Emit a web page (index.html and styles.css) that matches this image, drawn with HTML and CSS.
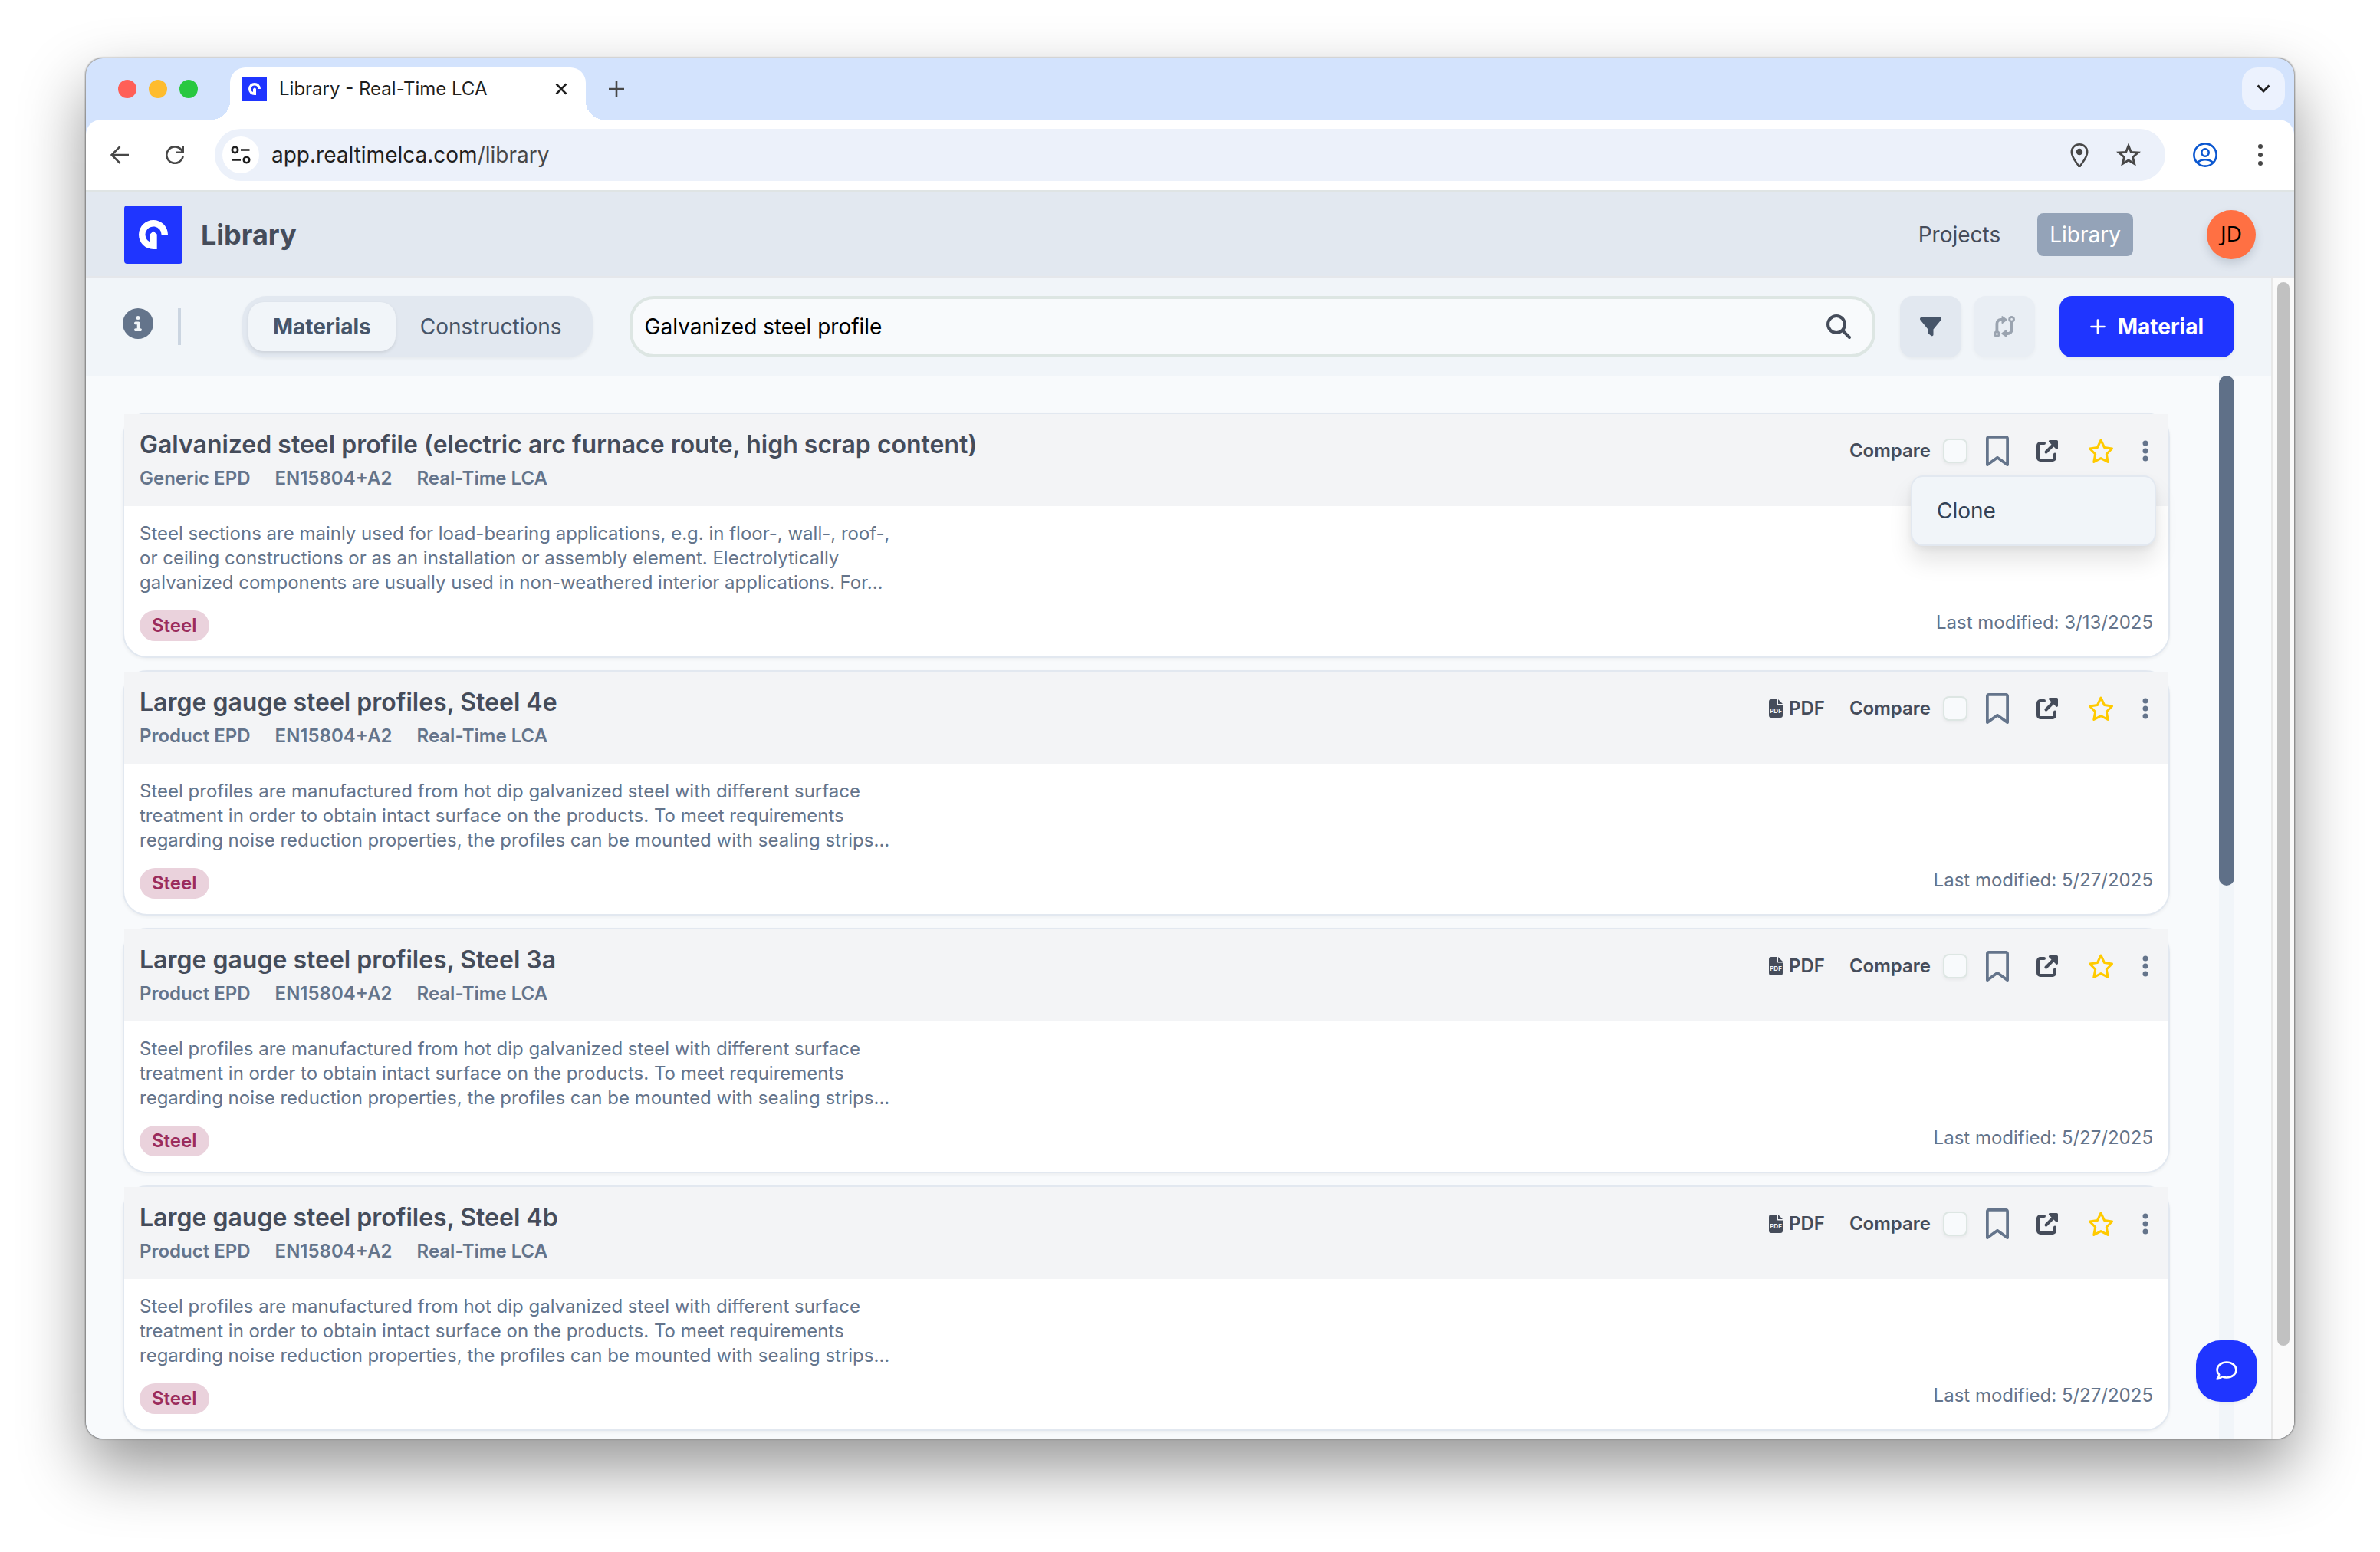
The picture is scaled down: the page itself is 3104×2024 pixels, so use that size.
FILE: index.html
```html
<!DOCTYPE html>
<html lang="en">
<head>
  <meta charset="UTF-8">
  <meta name="viewport" content="width=device-width, initial-scale=1.0">
  <title>Library - Real-Time LCA</title>
  <link rel="stylesheet" href="styles.css">
</head>
<body>

<!-- Shared icons -->
<svg class="sprite" aria-hidden="true">
  <symbol id="logo" viewBox="0 0 76 76">
    <rect width="76" height="76" fill="#1f35ff"/>
    <path fill="#fff" d="M57 38A19 19 0 1 0 38 57H42.7V37.5L38 33.6 33.3 37.8V47.5A10.6 10.6 0 1 1 48.6 38Z"/>
  </symbol>
  <symbol id="pdf" viewBox="0 0 18 24">
    <path fill="currentColor" d="M3 0H10.500V6a1.500 1.500 0 0 0 1.500 1.500H18V21a3 3 0 0 1-3 3H3a3 3 0 0 1-3-3V3a3 3 0 0 1 3-3zM12 0l6 6h-6z"/>
    <text x="9" y="18" text-anchor="middle" class="pdf-text">PDF</text>
  </symbol>
  <symbol id="bookmark" viewBox="0 0 384 512">
    <path fill="currentColor" d="M0 48C0 21.5 21.5 0 48 0V48V441.4l130.1-92.9c8.300-6 19.600-6 27.900 0L336 441.4V48H48V0H336c26.500 0 48 21.500 48 48V488c0 9-5 17.200-13 21.300s-17.600 3.400-24.900-1.800L192 397.500 37.900 507.500c-7.300 5.200-16.900 5.900-24.900 1.800S0 497 0 488V48z"/>
  </symbol>
  <symbol id="external" viewBox="0 0 28 28">
    <path fill="none" stroke="currentColor" stroke-width="4" stroke-linecap="round" d="M10 4H5a3 3 0 0 0-3 3V23a3 3 0 0 0 3 3H21a3 3 0 0 0 3-3V18.500M12.500 15.500L22 6"/>
    <path fill="currentColor" d="M17.500 0H26.500A1.500 1.500 0 0 1 28 1.500V10.500A1.500 1.500 0 0 1 25.500 11.600L16.400 2.600A1.500 1.500 0 0 1 17.500 0z"/>
  </symbol>
  <symbol id="star" viewBox="0 0 32 32">
    <path fill="none" stroke="currentColor" stroke-width="3" stroke-linejoin="round" d="M16 2L20.500 11.500 30.500 13 23.300 20.300 25.200 30.500 16 25.600 6.800 30.500 8.700 20.300 1.500 13 11.500 11.500z"/>
  </symbol>
  <symbol id="dots" viewBox="0 0 20 28">
    <circle cx="10" cy="4" r="3.500" fill="currentColor"/>
    <circle cx="10" cy="14" r="3.500" fill="currentColor"/>
    <circle cx="10" cy="24" r="3.500" fill="currentColor"/>
  </symbol>
</svg>

<div class="window">

  <!-- Browser tabs -->
  <div class="tab-strip">
    <div class="lights">
      <span class="light red"></span>
      <span class="light yellow"></span>
      <span class="light green"></span>
    </div>
    <div class="tab">
      <svg class="favicon"><use href="#logo"/></svg>
      <span class="tab-title">Library - Real-Time LCA</span>
      <button class="chrome-btn" aria-label="Close tab">
        <svg width="16" height="16" viewBox="0 0 16 16"><path d="M1.500 1.500L14.500 14.500M14.500 1.500L1.500 14.500" stroke="#1f1f1f" stroke-width="2.500"/></svg>
      </button>
    </div>
    <button class="chrome-btn new-tab" aria-label="New tab">
      <svg width="20" height="20" viewBox="0 0 20 20"><path d="M10 0V20M0 10H20" stroke="#474747" stroke-width="2.600"/></svg>
    </button>
    <button class="tab-search" aria-label="Search tabs">
      <svg width="18" height="12" viewBox="0 0 18 12"><path d="M1.500 1.500L9 9 16.500 1.500" fill="none" stroke="#1f1f1f" stroke-width="3"/></svg>
    </button>
  </div>

  <!-- Browser toolbar -->
  <div class="toolbar">
    <button class="chrome-btn wide" aria-label="Back">
      <svg width="24" height="24" viewBox="0 0 24 24"><path d="M24 12H2M12.500 1.200L1.700 12 12.500 22.800" fill="none" stroke="#474747" stroke-width="2.600"/></svg>
    </button>
    <button class="chrome-btn wide" aria-label="Reload">
      <svg width="24" height="24" viewBox="0 0 24 24"><path d="M22.700 13A10.700 10.700 0 1 1 20.500 5.500L22.500 8.500M22.700 0V8.700H14" fill="none" stroke="#474747" stroke-width="2.600"/></svg>
    </button>
    <div class="address">
      <button class="site-info" aria-label="Site information">
        <svg width="26" height="24" viewBox="0 0 26 24"><g fill="none" stroke="#1f1f1f" stroke-width="2.600"><circle cx="5.500" cy="5.500" r="3.700"/><path d="M13 5.500H24.500M2 18.500H13"/><circle cx="20.500" cy="18.500" r="3.700"/></g></svg>
      </button>
      <span class="url">app.realtimelca.com<span class="url-path">/library</span></span>
      <svg class="chrome-icon" viewBox="0 0 32 32"><path d="M16 32C12 25 5.800 19 5.800 11.500a10.200 10.200 0 0 1 20.400 0C26.200 19 20 25 16 32z" transform="translate(0 1) scale(1 .97)" fill="none" stroke="#474747" stroke-width="2.600"/><circle cx="16" cy="12" r="4.200" fill="#474747"/></svg>
      <svg class="chrome-icon" viewBox="0 0 32 32"><path d="M16 4L19.300 12.300 28.500 13 21.600 18.900 23.700 27.600 16 23 8.300 27.600 10.400 18.900 3.500 13 12.700 12.300z" fill="none" stroke="#474747" stroke-width="2.800"/></svg>
    </div>
    <button class="chrome-btn wide" aria-label="Profile">
      <svg width="32" height="32" viewBox="0 0 32 32"><g fill="none" stroke="#0b57d0" stroke-width="2.600"><circle cx="16" cy="16" r="14.600"/><circle cx="16" cy="13" r="4.700"/><path d="M6 26C11 21 21 21 26 26"/></g></svg>
    </button>
    <button class="chrome-btn wide" aria-label="Menu">
      <svg width="8" height="28" viewBox="0 0 8 28" fill="#474747"><circle cx="4" cy="3" r="3"/><circle cx="4" cy="14" r="3"/><circle cx="4" cy="25" r="3"/></svg>
    </button>
  </div>

  <!-- App header -->
  <header class="app-header">
    <svg class="logo"><use href="#logo"/></svg>
    <h1>Library</h1>
    <nav>
      <a href="#">Projects</a>
      <a href="#" class="active">Library</a>
    </nav>
    <button class="avatar">JD</button>
  </header>

  <div class="page">
    <main>

      <!-- Search and filters -->
      <div class="filters">
        <div class="info">
          <svg width="40" height="40" viewBox="0 0 512 512"><path fill="#64748b" d="M256 512A256 256 0 1 0 256 0a256 256 0 1 0 0 512zM216 336h24V272H216c-13.300 0-24-10.700-24-24s10.700-24 24-24h48c13.300 0 24 10.700 24 24v88h8c13.300 0 24 10.700 24 24s-10.700 24-24 24H216c-13.300 0-24-10.700-24-24s10.700-24 24-24zm40-208a32 32 0 1 1 0 64 32 32 0 1 1 0-64z"/></svg>
          <span class="divider"></span>
        </div>
        <div class="segment">
          <button class="active">Materials</button>
          <button>Constructions</button>
        </div>
        <div class="search">
          <input type="text" id="search" aria-label="Search materials" value="Galvanized steel profile">
          <label for="search" aria-label="Search">
            <svg width="32" height="32" viewBox="0 0 512 512"><path fill="#454c5a" d="M416 208c0 45.900-14.900 88.300-40 122.700L502.600 457.400c12.500 12.500 12.500 32.800 0 45.300s-32.800 12.500-45.300 0L330.700 376c-34.400 25.200-76.800 40-122.700 40C93.100 416 0 322.900 0 208S93.100 0 208 0S416 93.100 416 208zM208 352a144 144 0 1 0 0-288 144 144 0 1 0 0 288z"/></svg>
          </label>
        </div>
        <div class="tools">
          <button class="tool" aria-label="Filter">
            <svg width="28" height="28" viewBox="0 0 512 512"><path fill="#475569" d="M3.900 54.900C10.500 40.900 24.500 32 40 32H472c15.500 0 29.500 8.900 36.100 22.900s4.600 30.500-5.200 42.500L320 320.900V448c0 12.100-6.800 23.200-17.700 28.600s-23.800 4.300-33.500-3l-64-48c-8.100-6-12.800-15.500-12.800-25.600V320.900L9 97.300C-.7 85.400-2.800 68.800 3.900 54.900z"/></svg>
          </button>
          <button class="tool" aria-label="Compare" disabled>
            <svg width="28" height="28" viewBox="0 0 28 28"><g fill="none" stroke="#475569" stroke-width="3"><circle cx="23.600" cy="4.400" r="2.900"/><circle cx="4.400" cy="23.600" r="2.900"/><path stroke-width="3.800" d="M4.400 20.500V10a5 5 0 0 1 5-5H12M23.600 7.500V18a5 5 0 0 1-5 5H16"/></g><path fill="#475569" d="M10.500 1.200Q10.500-.5 12 .4L17.400 4.300Q18 5 17.400 5.700L12 9.700Q10.500 10.400 10.500 9zM17.500 26.800Q17.500 28.500 16 27.600L10.600 23.700Q10 23 10.600 22.300L16 18.300Q17.500 17.600 17.500 19z"/></svg>
          </button>
        </div>
        <button class="add">
          <svg width="20" height="20" viewBox="0 0 20 20"><path d="M10 1.500V18.500M1.500 10H18.500" stroke="#fff" stroke-width="2.700" stroke-linecap="round"/></svg>
          Material
        </button>
      </div>

      <!-- Results -->
      <div class="results">
        <div class="list">

          <article class="card">
            <div class="card-header">
              <div>
                <h2>Galvanized steel profile (electric arc furnace route, high scrap content)</h2>
                <div class="meta"><span>Generic EPD</span><span>EN15804+A2</span><span>Real-Time LCA</span></div>
              </div>
              <div class="actions">
                <label class="compare">Compare <input type="checkbox"></label>
                <button class="bookmark" aria-label="Bookmark"><svg><use href="#bookmark"/></svg></button>
                <button class="external" aria-label="Open"><svg><use href="#external"/></svg></button>
                <button class="star" aria-label="Favorite"><svg><use href="#star"/></svg></button>
                <div class="more">
                  <button class="dots" aria-label="More"><svg><use href="#dots"/></svg></button>
                  <div class="menu"><button>Clone</button></div>
                </div>
              </div>
            </div>
            <div class="card-body">
              <p>Steel sections are mainly used for load-bearing applications, e.g. in floor-, wall-, roof-, or ceiling constructions or as an installation or assembly element. Electrolytically galvanized components are usually used in non-weathered interior applications. For...</p>
              <div class="card-footer">
                <span class="tag">Steel</span>
                <span>Last modified: 3/13/2025</span>
              </div>
            </div>
          </article>

          <article class="card">
            <div class="card-header">
              <div>
                <h2>Large gauge steel profiles, Steel 4e</h2>
                <div class="meta"><span>Product EPD</span><span>EN15804+A2</span><span>Real-Time LCA</span></div>
              </div>
              <div class="actions">
                <a href="#" class="pdf"><svg><use href="#pdf"/></svg>PDF</a>
                <label class="compare">Compare <input type="checkbox"></label>
                <button class="bookmark" aria-label="Bookmark"><svg><use href="#bookmark"/></svg></button>
                <button class="external" aria-label="Open"><svg><use href="#external"/></svg></button>
                <button class="star" aria-label="Favorite"><svg><use href="#star"/></svg></button>
                <div class="more">
                  <button class="dots" aria-label="More"><svg><use href="#dots"/></svg></button>
                </div>
              </div>
            </div>
            <div class="card-body">
              <p>Steel profiles are manufactured from hot dip galvanized steel with different surface treatment in order to obtain intact surface on the products. To meet requirements regarding noise reduction properties, the profiles can be mounted with sealing strips...</p>
              <div class="card-footer">
                <span class="tag">Steel</span>
                <span>Last modified: 5/27/2025</span>
              </div>
            </div>
          </article>

          <article class="card">
            <div class="card-header">
              <div>
                <h2>Large gauge steel profiles, Steel 3a</h2>
                <div class="meta"><span>Product EPD</span><span>EN15804+A2</span><span>Real-Time LCA</span></div>
              </div>
              <div class="actions">
                <a href="#" class="pdf"><svg><use href="#pdf"/></svg>PDF</a>
                <label class="compare">Compare <input type="checkbox"></label>
                <button class="bookmark" aria-label="Bookmark"><svg><use href="#bookmark"/></svg></button>
                <button class="external" aria-label="Open"><svg><use href="#external"/></svg></button>
                <button class="star" aria-label="Favorite"><svg><use href="#star"/></svg></button>
                <div class="more">
                  <button class="dots" aria-label="More"><svg><use href="#dots"/></svg></button>
                </div>
              </div>
            </div>
            <div class="card-body">
              <p>Steel profiles are manufactured from hot dip galvanized steel with different surface treatment in order to obtain intact surface on the products. To meet requirements regarding noise reduction properties, the profiles can be mounted with sealing strips...</p>
              <div class="card-footer">
                <span class="tag">Steel</span>
                <span>Last modified: 5/27/2025</span>
              </div>
            </div>
          </article>

          <article class="card">
            <div class="card-header">
              <div>
                <h2>Large gauge steel profiles, Steel 4b</h2>
                <div class="meta"><span>Product EPD</span><span>EN15804+A2</span><span>Real-Time LCA</span></div>
              </div>
              <div class="actions">
                <a href="#" class="pdf"><svg><use href="#pdf"/></svg>PDF</a>
                <label class="compare">Compare <input type="checkbox"></label>
                <button class="bookmark" aria-label="Bookmark"><svg><use href="#bookmark"/></svg></button>
                <button class="external" aria-label="Open"><svg><use href="#external"/></svg></button>
                <button class="star" aria-label="Favorite"><svg><use href="#star"/></svg></button>
                <div class="more">
                  <button class="dots" aria-label="More"><svg><use href="#dots"/></svg></button>
                </div>
              </div>
            </div>
            <div class="card-body">
              <p>Steel profiles are manufactured from hot dip galvanized steel with different surface treatment in order to obtain intact surface on the products. To meet requirements regarding noise reduction properties, the profiles can be mounted with sealing strips...</p>
              <div class="card-footer">
                <span class="tag">Steel</span>
                <span>Last modified: 5/27/2025</span>
              </div>
            </div>
          </article>

        </div>
        <div class="list-scroll"><div class="list-thumb"></div></div>
      </div>
    </main>
    <div class="page-scroll"><div class="page-thumb"></div></div>
  </div>

  <button class="chat" aria-label="Chat">
    <svg width="28" height="26" viewBox="0 0 28 26"><path d="M14 1.500C20.900 1.500 26.500 6 26.500 11.500S20.900 21.500 14 21.500C11.900 21.500 9.900 21.100 8.100 20.300 6.300 22 4 23.500 1.600 23.500 3.200 21.900 4.100 20 4.200 17.700 2.500 16 1.500 13.800 1.500 11.500 1.500 6 7.100 1.500 14 1.500z" fill="none" stroke="#fff" stroke-width="2.600" stroke-linejoin="round"/></svg>
  </button>
</div>

</body>
</html>
```
FILE: styles.css
```css
* {
  box-sizing: border-box;
}
body {
  margin: 0;
  padding: 76px 112px 148px;
  min-height: 100vh;
  display: flex;
  flex-direction: column;
  background: #fff;
  font-family: Inter, sans-serif;
  font-size: 28px;
  line-height: 40px;
  color: #454c5a;
}
button {
  display: flex;
  align-items: center;
  justify-content: center;
  padding: 0;
  border: none;
  background: none;
  font: inherit;
  color: inherit;
  cursor: pointer;
}
a {
  color: inherit;
  text-decoration: none;
}
.sprite {
  display: none;
}
.window {
  position: relative;
  flex: 1;
  display: flex;
  flex-direction: column;
  overflow: hidden;
  background: #d3e3fd;
  border-radius: 22px;
  box-shadow: 0 0 2px 1px rgba(0, 0, 0, 0.4), 0 38px 84px rgba(0, 0, 0, 0.42);
}

/* Browser tabs */
.tab-strip {
  display: flex;
  align-items: center;
  height: 80px;
  padding: 0 12px 0 42px;
}
.lights {
  display: flex;
  gap: 16px;
  margin-right: 42px;
}
.light {
  width: 24px;
  height: 24px;
  border-radius: 50%;
}
.red {
  background: #ff5f57;
}
.yellow {
  background: #febc2e;
}
.green {
  background: #28c840;
}
.tab {
  position: relative;
  align-self: flex-end;
  display: flex;
  align-items: center;
  gap: 16px;
  width: 464px;
  height: 68px;
  padding: 0 16px 12px;
  background: #fff;
  border-radius: 20px 20px 0 0;
}
.tab::before,
.tab::after {
  content: "";
  position: absolute;
  bottom: 0;
  width: 24px;
  height: 24px;
}
.tab::before {
  left: -24px;
  background: radial-gradient(circle at 0 0, transparent 24px, #fff 24px);
}
.tab::after {
  right: -24px;
  background: radial-gradient(circle at 100% 0, transparent 24px, #fff 24px);
}
.favicon {
  width: 32px;
  height: 32px;
}
.tab-title {
  flex: 1;
  font-size: 24px;
  line-height: 32px;
  color: #1f1f1f;
}
.chrome-btn {
  width: 32px;
  height: 32px;
}
.chrome-btn.wide {
  width: 40px;
}
.new-tab {
  margin-left: 24px;
}
.tab-search {
  width: 56px;
  height: 56px;
  margin-left: auto;
  background: #ecf2fe;
  border-radius: 20px;
}

/* Browser toolbar */
.toolbar {
  display: flex;
  align-items: center;
  gap: 32px;
  padding: 12px 24px;
  background: #fff;
  border-bottom: 2px solid #dfe4e4;
  border-radius: 20px 20px 0 0;
}
.address {
  flex: 1;
  display: flex;
  align-items: center;
  gap: 32px;
  height: 68px;
  padding: 0 32px 0 10px;
  background: #ecf1fa;
  border-radius: 34px;
}
.site-info {
  width: 48px;
  height: 48px;
  margin-right: -16px;
  background: #fff;
  border-radius: 50%;
}
.url {
  flex: 1;
  color: #1f1f1f;
}
.url-path {
  color: #474747;
}
.chrome-icon {
  width: 32px;
  height: 32px;
}

/* App header */
.app-header {
  display: flex;
  align-items: center;
  padding: 18px 50px 16px;
  background: #e2e8f0;
  border-bottom: 2px solid #e5e7eb;
}
.logo {
  width: 76px;
  height: 76px;
  border-radius: 4px;
}
h1 {
  margin: 0 auto 0 24px;
  font-size: 36px;
  font-weight: 700;
}
nav {
  display: flex;
  gap: 32px;
  margin-right: 96px;
}
nav a {
  padding: 8px 16px;
  border-radius: 8px;
}
nav .active {
  background: #94a3b8;
  color: #fff;
}
.avatar {
  width: 64px;
  height: 64px;
  padding-bottom: 4px;
  background: #ff7043;
  border-radius: 50%;
  box-shadow: 0 6px 12px rgba(71, 85, 105, 0.2);
  font-family: "Noto Sans", sans-serif;
  color: #000;
}

/* Page */
.page {
  flex: 1;
  display: flex;
  background: #f8fafc;
}
main {
  flex: 1;
  display: flex;
  flex-direction: column;
}
.page-scroll {
  width: 30px;
  padding: 6px 6px 0;
  background: #fafafa;
  border-left: 2px solid #e8e8e8;
}
.page-thumb {
  width: 16px;
  height: 92%;
  background: #c1c1c1;
  border-radius: 8px;
}

/* Search and filters */
.filters {
  display: flex;
  align-items: center;
  padding: 24px 48px;
  background: #f1f5f9;
}
.info {
  display: flex;
  gap: 32px;
  margin-right: 80px;
}
.divider {
  width: 4px;
  height: 48px;
  background: #cbd5e1;
}
.segment {
  display: flex;
  padding: 8px;
  background: #e2e8f0;
  border-radius: 32px;
  box-shadow: 0 2px 4px rgba(0, 0, 0, 0.05);
  color: #475569;
}
.segment button {
  height: 64px;
  padding: 0 32px;
}
.segment .active {
  background: #f1f5f9;
  border-radius: 20px;
  box-shadow: 0 2px 4px rgba(0, 0, 0, 0.1);
  font-weight: 700;
}
.search {
  flex: 1;
  display: flex;
  align-items: center;
  height: 80px;
  margin: 0 32px 0 48px;
  padding: 0 28px 0 16px;
  background: #f8fafc;
  border: 4px solid #dde6e3;
  border-radius: 32px;
}
.search input {
  flex: 1;
  min-width: 0;
  padding: 0;
  border: none;
  outline: none;
  background: none;
  font: inherit;
  color: #000;
}
.search label {
  display: flex;
}
.tools {
  display: flex;
  gap: 16px;
}
.tool {
  width: 80px;
  height: 80px;
  background: #e2e8f0;
  border-radius: 16px;
  box-shadow: 0 2px 4px rgba(0, 0, 0, 0.05);
}
.tool:disabled {
  opacity: 0.5;
}
.add {
  gap: 16px;
  height: 80px;
  margin-left: 32px;
  padding: 0 40px;
  background: #1f35ff;
  border-radius: 16px;
  box-shadow: 0 2px 4px rgba(0, 0, 0, 0.05);
  font-weight: 700;
  color: #fff;
}

/* Results */
.results {
  flex: 1;
  display: flex;
  gap: 64px;
  padding: 0 48px;
}
.list {
  flex: 1;
  display: flex;
  flex-direction: column;
  gap: 16px;
  padding: 48px 0 8px;
}
.list-scroll {
  width: 20px;
  background: #f1f5f9;
}
.list-thumb {
  height: 48%;
  background: #5f7088;
  border-radius: 10px;
}
.card {
  background: #fff;
  border: 2px solid #e2e8f0;
  border-radius: 32px;
  box-shadow: 0 2px 4px rgba(0, 0, 0, 0.05);
}
.card-header {
  display: flex;
  justify-content: space-between;
  padding: 20px;
  background: #f3f4f6;
}
h2 {
  margin: 0 0 8px;
  font-size: 32px;
  line-height: 40px;
  font-weight: 600;
}
.meta {
  display: flex;
  gap: 32px;
  font-size: 24px;
  line-height: 32px;
  font-weight: 600;
  color: #64748b;
}
.actions {
  display: flex;
  align-items: center;
  height: 56px;
  font-size: 24px;
  line-height: 32px;
}
.actions button {
  margin-left: 24px;
}
.pdf {
  display: flex;
  align-items: center;
  gap: 8px;
  margin-right: 32px;
  font-weight: 600;
}
.pdf svg {
  width: 18px;
  height: 24px;
}
.pdf-text {
  font-size: 8px;
  font-weight: 700;
  fill: #f3f4f6;
}
.compare {
  display: flex;
  align-items: center;
  gap: 16px;
  font-weight: 600;
}
.compare input {
  appearance: none;
  width: 32px;
  height: 32px;
  margin: 0;
  background: #f8fafc;
  border: 2px solid #dde6e3;
  border-radius: 8px;
  box-shadow: 0 2px 4px rgba(0, 0, 0, 0.05);
}
.bookmark svg {
  width: 30px;
  height: 40px;
  color: #64748b;
}
.actions .external {
  margin-left: 36px;
}
.external svg {
  width: 28px;
  height: 28px;
}
.actions .star {
  margin-left: 40px;
}
.star svg {
  width: 32px;
  height: 32px;
  color: #ffca00;
}
.more {
  position: relative;
}
.actions .dots {
  margin-left: 32px;
}
.dots svg {
  width: 20px;
  height: 28px;
  color: #64748b;
}
.menu {
  position: absolute;
  top: 46px;
  right: -4px;
  z-index: 1;
  width: 320px;
  background: #f1f5f9;
  border: 2px solid #e2e8f0;
  border-radius: 16px;
  box-shadow: 0 20px 30px rgba(0, 0, 0, 0.1), 0 4px 8px rgba(0, 0, 0, 0.06);
}
.actions .menu button {
  width: 100%;
  height: 88px;
  margin: 0;
  padding: 0 32px;
  justify-content: flex-start;
  font-size: 28px;
  color: #334155;
}
.card-body {
  padding: 20px;
  font-size: 24px;
  line-height: 32px;
  color: #64748b;
}
.card-body p {
  max-width: 1000px;
  margin: 0 0 20px;
}
.card-footer {
  display: flex;
  justify-content: space-between;
}
.tag {
  padding: 4px 16px;
  background: #ead2dc;
  border-radius: 20px;
  font-weight: 600;
  color: #9b2c5c;
}

/* Chat */
.chat {
  position: absolute;
  right: 48px;
  bottom: 48px;
  width: 80px;
  height: 80px;
  background: #1f35ff;
  border-radius: 32px;
  box-shadow: 0 2px 4px rgba(0, 0, 0, 0.05);
}
```
